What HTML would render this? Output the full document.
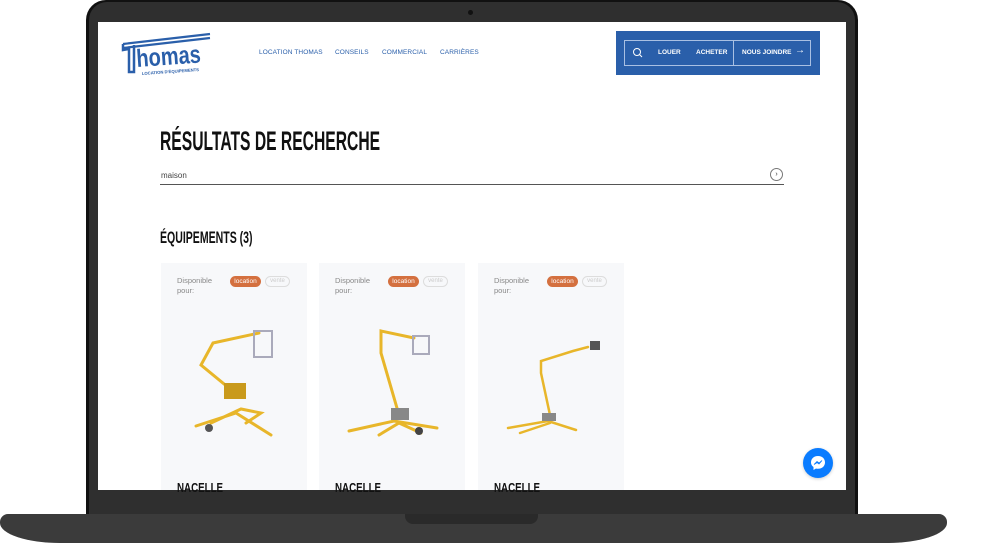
<!DOCTYPE html>
<html><head><meta charset="utf-8"><style>
*{margin:0;padding:0;box-sizing:border-box}
body{width:1000px;height:543px;background:#fff;position:relative;overflow:hidden;font-family:"Liberation Sans",sans-serif}
.a{position:absolute}
.cond{font-family:"Liberation Sans Narrow","Liberation Sans",sans-serif;font-weight:bold;color:#111;transform-origin:left top;white-space:nowrap}
.nav{color:#2a5faa;font-size:6.5px;letter-spacing:.1px;top:49px}
.card{position:absolute;top:263px;width:146px;height:227px;background:#f7f8fa}
.disp{position:absolute;left:16px;top:13px;font-size:7.5px;line-height:10px;color:#888}
.loc{position:absolute;left:69px;top:13px;width:31px;height:11px;border-radius:6px;background:#d4703f;color:#fff;font-size:6.5px;text-align:center;line-height:11px}
.ven{position:absolute;left:104px;top:13px;width:25px;height:11px;border-radius:6px;border:1px solid #ddd;color:#ccc;font-size:6px;text-align:center;line-height:9px}
.nac{position:absolute;left:16px;top:217px;font-size:13px;transform:scaleX(.75)}
.wb{color:#fff;font-size:6.5px;font-weight:bold;top:49px}
</style></head><body>
<div class="a" style="left:86px;top:0;width:772px;height:518px;background:#111;border-radius:20px 20px 0 0"></div>
<div class="a" style="left:89px;top:2px;width:766px;height:516px;background:#2f2f2f;border-radius:18px 18px 0 0"></div>
<div class="a" style="left:468px;top:10px;width:5px;height:5px;border-radius:50%;background:#111"></div>
<div class="a" style="left:0;top:514px;width:947px;height:29px;background:#3b3b3b;border-radius:8px 8px 60px 60px/8px 8px 20px 20px"></div>
<div class="a" style="left:405px;top:514px;width:133px;height:10px;background:#2a2a2a;border-radius:0 0 8px 8px"></div>
<div class="a" style="left:98px;top:22px;width:748px;height:468px;background:#fff;overflow:hidden"></div>
<svg class="a" style="left:120px;top:30px" width="95" height="48" viewBox="0 0 95 48">
<path d="M3 14 L90 4 M3 18 L90 8" stroke="#2a5faa" stroke-width="2.2" fill="none"/>
<path d="M3 14 L3 20 L9 19 L9 42 L14 42 L14 15" stroke="#2a5faa" stroke-width="2.5" fill="none"/>
<text x="17" y="37" font-family="Liberation Sans,sans-serif" font-weight="bold" font-size="25" fill="#2a5faa" transform="rotate(-4 17 37) translate(17 37) scale(.8 1) translate(-17 -37)">homas</text>
<text x="22" y="45" font-family="Liberation Sans,sans-serif" font-weight="bold" font-size="4.2" fill="#2a5faa" transform="rotate(-4 22 45)">LOCATION D'ÉQUIPEMENTS</text>
</svg>
<div class="a nav" style="left:259px">LOCATION THOMAS</div>
<div class="a nav" style="left:335px">CONSEILS</div>
<div class="a nav" style="left:382px">COMMERCIAL</div>
<div class="a nav" style="left:440px">CARRIÈRES</div>
<div class="a" style="left:616px;top:31px;width:204px;height:44px;background:#2a5faa"></div>
<div class="a" style="left:624px;top:40px;width:187px;height:26px;border:1px solid #a9c0e3"></div>
<div class="a" style="left:733px;top:40px;width:1px;height:26px;background:#a9c0e3"></div>
<svg class="a" style="left:632px;top:47px" width="12" height="12"><circle cx="5" cy="5" r="3.5" stroke="#fff" fill="none" stroke-width="1"/><path d="M7.5 7.5 L10 10" stroke="#fff"/></svg>
<div class="a wb" style="left:658px">LOUER</div>
<div class="a wb" style="left:696px">ACHETER</div>
<div class="a wb" style="left:742px">NOUS JOINDRE</div>
<div class="a" style="left:795px;top:45px;color:#fff;font-size:10px">→</div>
<div class="a cond" style="left:160px;top:126px;font-size:27px;transform:scaleX(.58)">RÉSULTATS DE RECHERCHE</div>
<div class="a" style="left:161px;top:171px;font-size:8px;color:#444">maison</div>
<div class="a" style="left:160px;top:184px;width:624px;height:1px;background:#555"></div>
<div class="a" style="left:770px;top:168px;width:13px;height:13px;border:1px solid #777;border-radius:50%;font-size:7px;text-align:center;line-height:11px;color:#333">›</div>
<div class="a cond" style="left:160px;top:228px;font-size:17px;transform:scaleX(.62)">ÉQUIPEMENTS (3)</div>
<div class="card" style="left:161px"><div class="disp">Disponible<br>pour:</div><div class="loc">location</div><div class="ven">vente</div><div class="nac cond">NACELLE</div>
<svg class="a" style="left:0;top:0" width="146" height="200"><g stroke="#e8b62a" stroke-width="3" fill="none" stroke-linecap="round"><path d="M74 130 L40 102 L52 80 L98 70"/><path d="M35 163 L75 150 L110 172 M50 160 L80 146 L100 150 L85 160"/></g><rect x="63" y="120" width="22" height="16" fill="#c99a1c"/><rect x="93" y="68" width="18" height="26" fill="none" stroke="#aab" stroke-width="2"/><circle cx="48" cy="165" r="4" fill="#555"/></svg></div>
<div class="card" style="left:319px"><div class="disp">Disponible<br>pour:</div><div class="loc">location</div><div class="ven">vente</div><div class="nac cond">NACELLE</div>
<svg class="a" style="left:0;top:0" width="146" height="200"><g stroke="#e8b62a" stroke-width="3" fill="none" stroke-linecap="round"><path d="M80 152 L62 90 L62 68 L95 75"/><path d="M30 168 L75 158 L118 165 M60 172 L80 160 L102 170"/></g><rect x="72" y="145" width="18" height="12" fill="#888"/><rect x="94" y="73" width="16" height="18" fill="none" stroke="#aab" stroke-width="2"/><circle cx="100" cy="168" r="4" fill="#444"/></svg></div>
<div class="card" style="left:478px"><div class="disp">Disponible<br>pour:</div><div class="loc">location</div><div class="ven">vente</div><div class="nac cond">NACELLE</div>
<svg class="a" style="left:0;top:0" width="146" height="200"><g stroke="#e8b62a" stroke-width="2.5" fill="none" stroke-linecap="round"><path d="M72 152 L63 110 L63 98 L95 88 L110 84"/><path d="M30 165 L70 158 L98 167 M42 170 L72 160"/></g><rect x="64" y="150" width="14" height="8" fill="#888"/><rect x="112" y="78" width="10" height="9" fill="#555"/></svg></div>
<div class="a" style="left:803px;top:448px;width:30px;height:30px;border-radius:50%;background:#0a7cff;box-shadow:0 1px 3px rgba(0,0,0,.2)"></div>
<svg class="a" style="left:809px;top:454px" width="18" height="18"><path d="M9 2 C4.5 2 2 5 2 8.5 C2 10.5 3 12 4.5 13 L4.5 16 L7 14.5 C7.6 14.7 8.3 14.8 9 14.8 C13.5 14.8 16 11.8 16 8.4 C16 5 13.5 2 9 2 Z" fill="#fff"/><path d="M5 10.5 L8 7.5 L10 9 L13 6.5 L10 10 L8 8.6 Z" fill="#0a7cff" stroke="#0a7cff" stroke-width=".8"/></svg>
</body></html>
